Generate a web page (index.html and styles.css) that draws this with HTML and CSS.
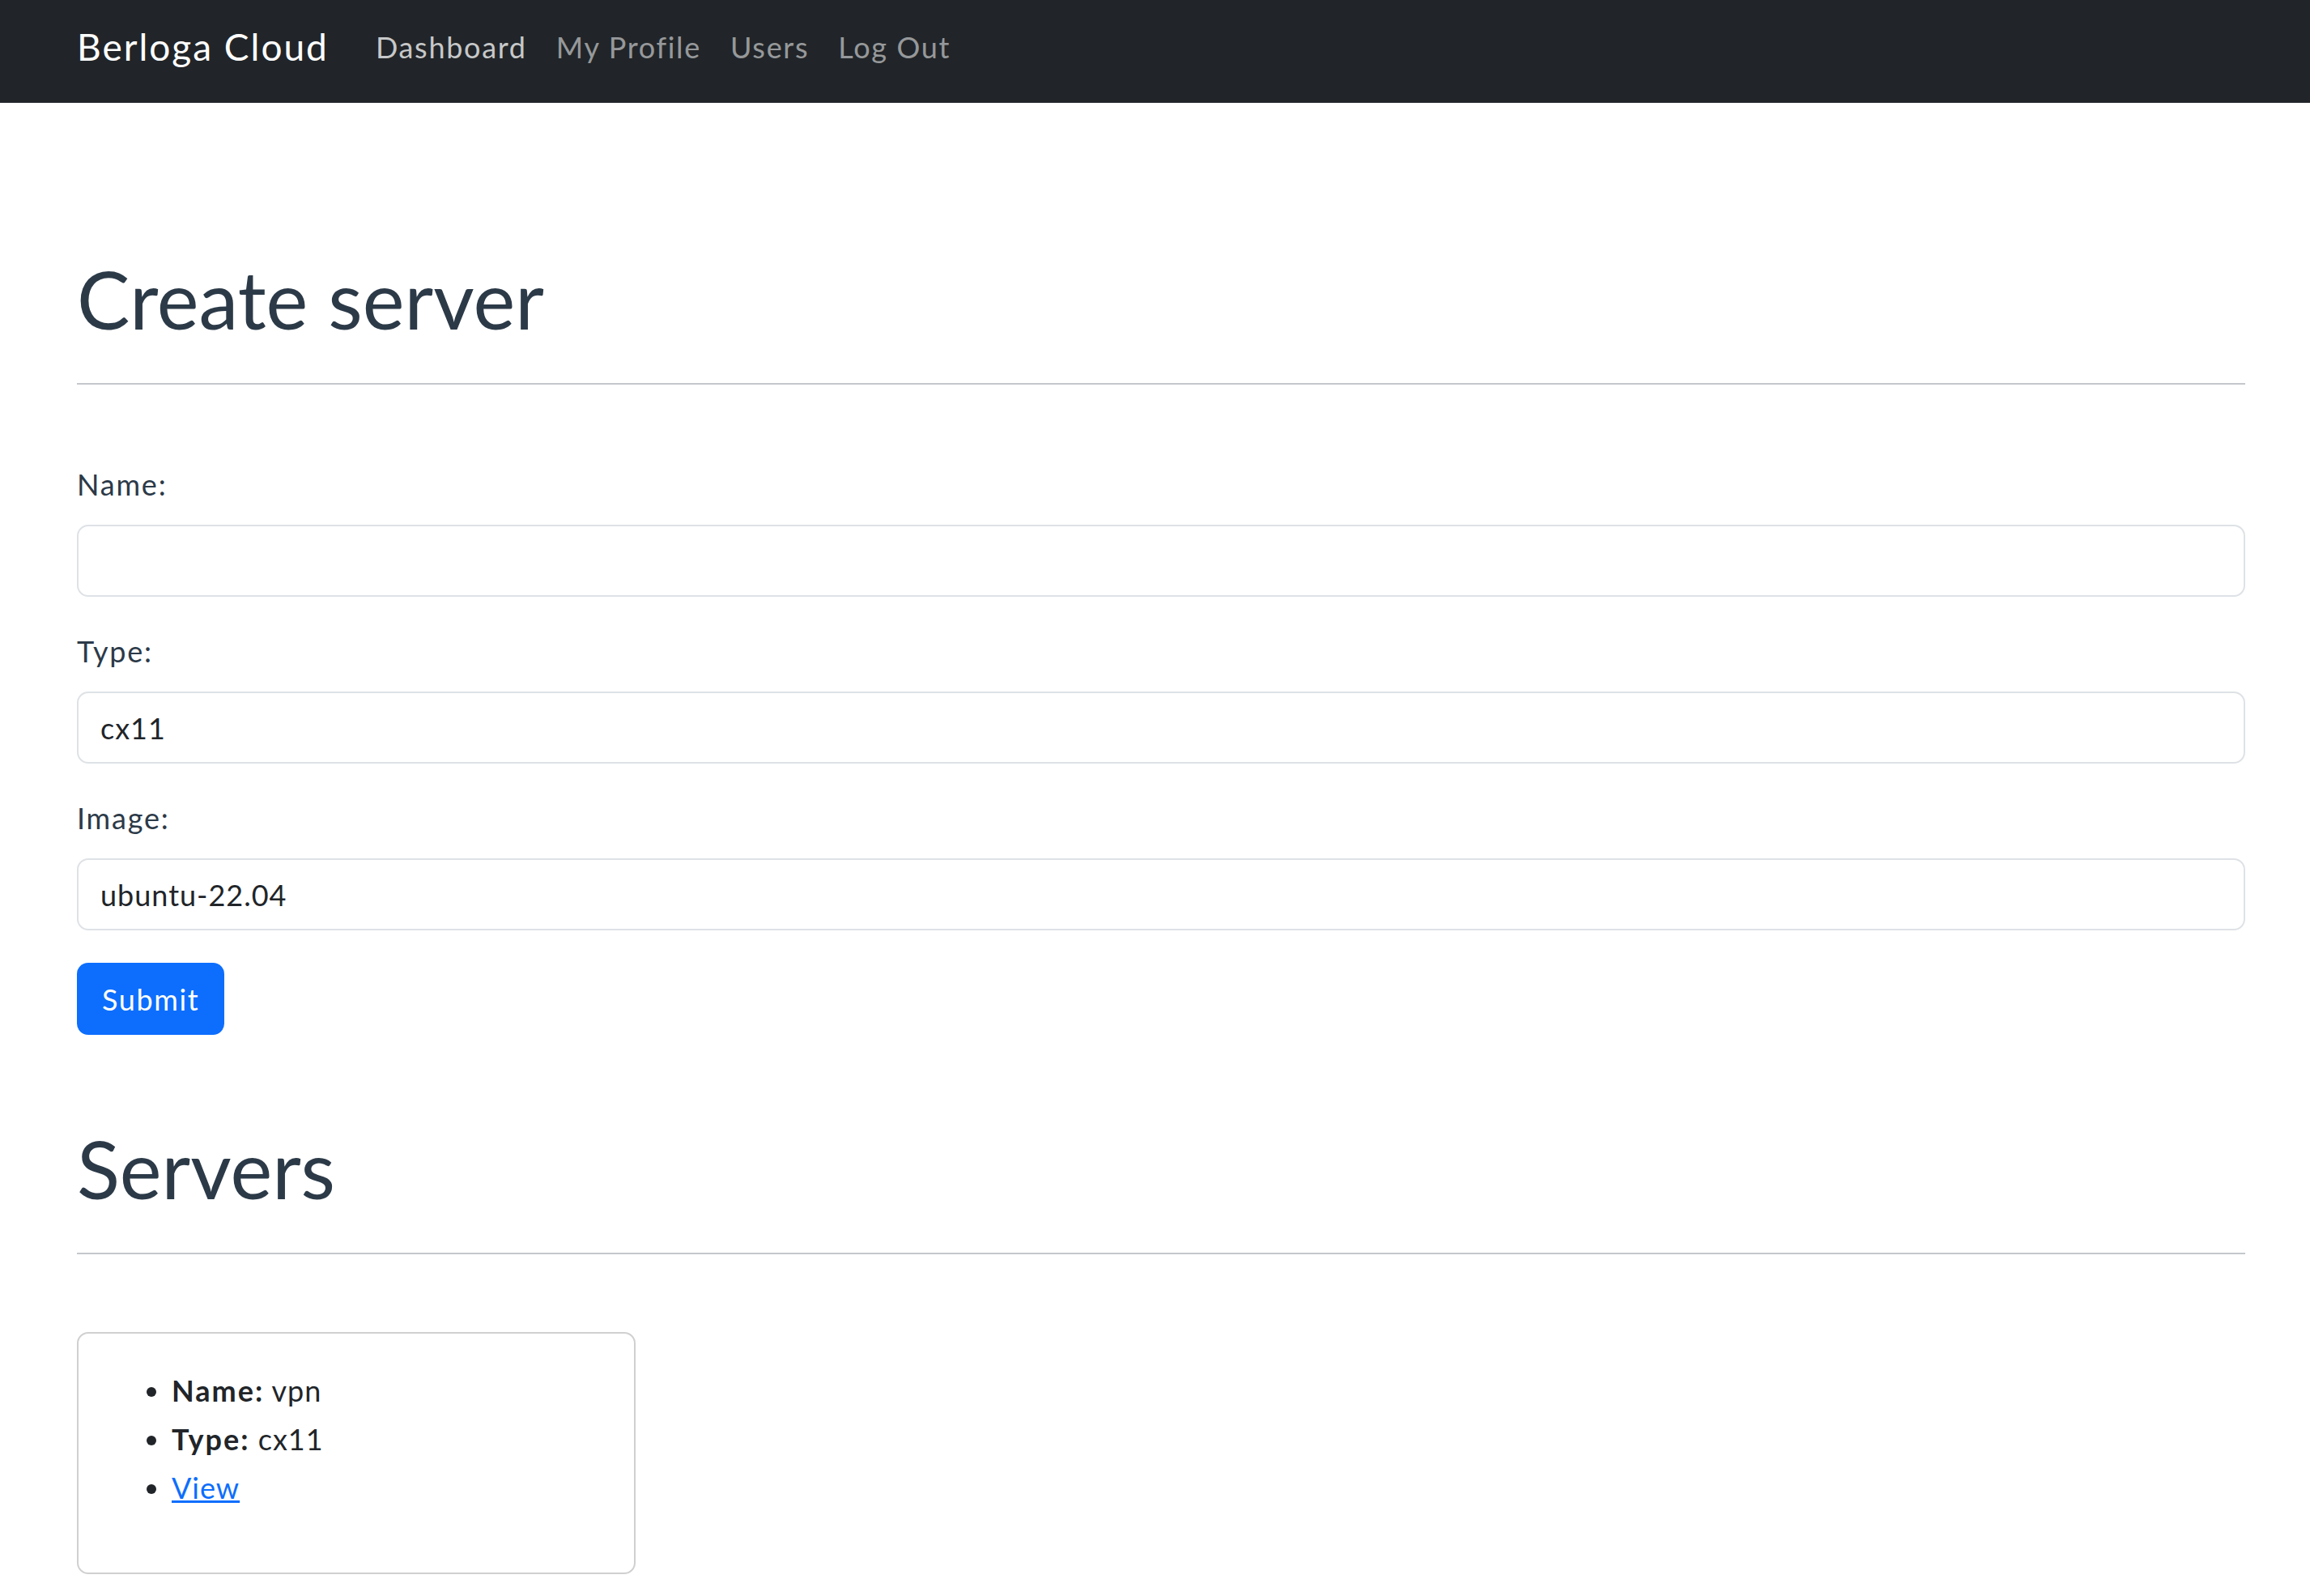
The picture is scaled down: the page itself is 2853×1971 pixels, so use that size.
FILE: index.html
```html
<!DOCTYPE html>
<html lang="en">
<head>
<meta charset="utf-8">
<title>Berloga Cloud</title>
<link rel="stylesheet" href="styles.css">
</head>
<body>
<nav class="navbar">
  <a class="brand" href="#">Berloga Cloud</a>
  <ul class="nav">
    <li><a class="nav-link active" href="#">Dashboard</a></li>
    <li><a class="nav-link" href="#">My Profile</a></li>
    <li><a class="nav-link" href="#">Users</a></li>
    <li><a class="nav-link" href="#">Log Out</a></li>
  </ul>
</nav>
<main class="container">
  <h1 class="page-title">Create server</h1>
  <hr class="rule">
  <form class="form">
    <div class="field">
      <label class="label" for="name">Name:</label>
      <input class="control" id="name" type="text" value="">
    </div>
    <div class="field">
      <label class="label" for="type">Type:</label>
      <input class="control" id="type" type="text" value="cx11">
    </div>
    <div class="field">
      <label class="label" for="image">Image:</label>
      <input class="control" id="image" type="text" value="ubuntu-22.04">
    </div>
    <button class="btn" type="button">Submit</button>
  </form>
  <h2 class="page-title section-title">Servers</h2>
  <hr class="rule">
  <div class="card">
    <ul class="details">
      <li><strong>Name:</strong> vpn</li>
      <li><strong>Type:</strong> cx11</li>
      <li><a class="link" href="#">View</a></li>
    </ul>
  </div>
</main>
</body>
</html>
```

FILE: styles.css
```css
html, body {
  margin: 0;
  padding: 0;
  background: #fff;
}
body {
  font-family: Lato, "Open Sans", "Liberation Sans", sans-serif;
  font-size: 36px;
  line-height: 54px;
  letter-spacing: 1px;
  color: #212529;
}
.navbar {
  height: 127px;
  box-sizing: border-box;
  background: #212529;
  display: flex;
  align-items: flex-start;
  padding: 24px 80px 0 95px;
}
.brand {
  font-size: 46px;
  line-height: 68px;
  letter-spacing: 2px;
  color: #fff;
  text-decoration: none;
  margin-right: 40px;
}
.nav {
  display: flex;
  list-style: none;
  margin: 0;
  padding: 2px 0 0 0;
}
.nav-link {
  display: block;
  padding: 0 18px;
  font-size: 36px;
  line-height: 64px;
  letter-spacing: 1.7px;
  color: rgba(255, 255, 255, 0.55);
  text-decoration: none;
}
.nav-link.active {
  color: rgba(255, 255, 255, 0.75);
}
.container {
  padding: 183px 80px 40px 95px;
}
.page-title {
  margin: 0;
  font-size: 98px;
  line-height: 118px;
  font-weight: 400;
  letter-spacing: 0;
  color: #2c3a48;
}
.section-title {
  margin-top: 106px;
}
.rule {
  margin: 45px 0 0 0;
  border: 0;
  border-top: 2px solid #c4c8cc;
  height: 0;
}
.form {
  margin-top: 96px;
}
.field {
  margin-bottom: 40px;
}
.label {
  display: block;
  color: #2c3a48;
  letter-spacing: 1.8px;
  margin-bottom: 23px;
}
.control {
  display: block;
  width: 100%;
  box-sizing: border-box;
  height: 89px;
  padding: 0 27px;
  border: 2px solid #dee2e6;
  border-radius: 14px;
  font-family: inherit;
  font-size: 36px;
  letter-spacing: 1px;
  color: #212529;
  background: #fff;
  outline: none;
}
.btn {
  display: block;
  height: 89px;
  padding: 0 31px;
  border: 0;
  border-radius: 14px;
  background: #0d6efd;
  color: #fff;
  font-family: inherit;
  font-size: 36px;
  line-height: 54px;
  letter-spacing: 1.6px;
}
.card {
  margin-top: 96px;
  width: 690px;
  box-sizing: border-box;
  border: 2px solid #d0d0d0;
  border-radius: 14px;
  padding: 40px 36px 36px 36px;
}
.details {
  margin: 0 0 39px 0;
  padding-left: 79px;
  line-height: 60px;
}
.details strong {
  font-weight: 700;
  letter-spacing: 2px;
}
.link {
  color: #0d6efd;
  text-decoration: underline;
}
```
